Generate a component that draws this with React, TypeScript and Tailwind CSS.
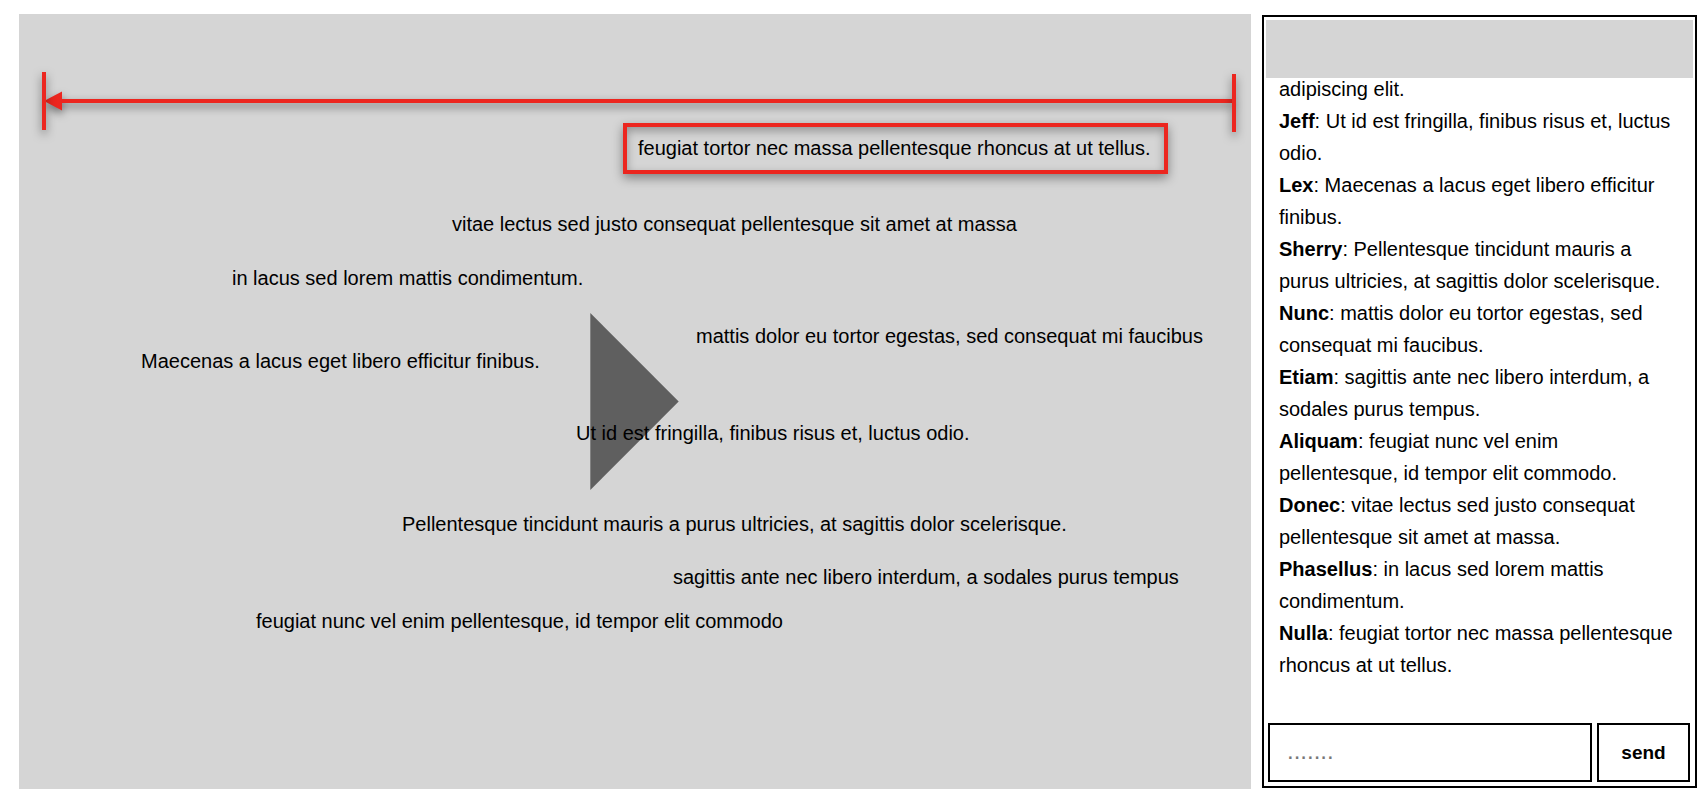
type Comment = { text: string; place: string };

const comments: Comment[] = [
  { text: "vitae lectus sed justo consequat pellentesque sit amet at massa", place: "left-[433px] top-[198px]" },
  { text: "in lacus sed lorem mattis condimentum.", place: "left-[213px] top-[252px]" },
  { text: "mattis dolor eu tortor egestas, sed consequat mi faucibus", place: "left-[677px] top-[310px]" },
  { text: "Maecenas a lacus eget libero efficitur finibus.", place: "left-[122px] top-[335px]" },
  { text: "Ut id est fringilla, finibus risus et, luctus odio.", place: "left-[557px] top-[407px]" },
  { text: "Pellentesque tincidunt mauris a purus ultricies, at sagittis dolor scelerisque.", place: "left-[383px] top-[498px]" },
  { text: "sagittis ante nec libero interdum, a sodales purus tempus", place: "left-[654px] top-[551px]" },
  { text: "feugiat nunc vel enim pellentesque, id tempor elit commodo", place: "left-[237px] top-[595px]" },
];

const messages = [
  { name: "", text: "adipiscing elit." },
  { name: "Jeff", text: "Ut id est fringilla, finibus risus et, luctus odio." },
  { name: "Lex", text: "Maecenas a lacus eget libero efficitur finibus." },
  { name: "Sherry", text: "Pellentesque tincidunt mauris a purus ultricies, at sagittis dolor scelerisque." },
  { name: "Nunc", text: "mattis dolor eu tortor egestas, sed consequat mi faucibus." },
  { name: "Etiam", text: "sagittis ante nec libero interdum, a sodales purus tempus." },
  { name: "Aliquam", text: "feugiat nunc vel enim pellentesque, id tempor elit commodo." },
  { name: "Donec", text: "vitae lectus sed justo consequat pellentesque sit amet at massa." },
  { name: "Phasellus", text: "in lacus sed lorem mattis condimentum." },
  { name: "Nulla", text: "feugiat tortor nec massa pellentesque rhoncus at ut tellus." },
];

// Horizontal span with end bars that shows the travel of a comment.
function TravelArrow() {
  return (
    <div className="absolute left-[23px] right-[15px] top-[58px] h-[60px]" aria-hidden="true">
      <div className="absolute left-[2px] right-[3px] top-[19px] flex h-5 items-center drop-shadow-[0_4px_4px_rgba(0,0,0,0.5)]">
        <svg className="h-5 w-[18px] shrink-0" viewBox="0 0 18 20">
          <path d="M0 10 18 0.5v19z" fill="#ec261f" />
        </svg>
        <div className="h-1 flex-1 bg-[#ec261f]" />
      </div>
      <div className="absolute left-0 top-0 h-[58px] w-1 bg-[#ec261f] shadow-[0_4px_10px_rgba(0,0,0,0.5)]" />
      <div className="absolute right-0 top-[2px] h-[58px] w-1 bg-[#ec261f] shadow-[0_4px_10px_rgba(0,0,0,0.5)]" />
    </div>
  );
}

function Stage() {
  return (
    <section className="relative min-w-0 flex-1 overflow-hidden bg-[#d5d5d5]" aria-label="Video">
      <TravelArrow />
      <button type="button" aria-label="Play" className="absolute left-[571px] top-[299px]">
        <svg className="block h-[177px] w-[89px]" viewBox="0 0 89 177">
          <path d="M0.3 0 88.7 88.5 0.3 177z" fill="#5f5f5f" />
        </svg>
      </button>
      <p className="absolute left-[604px] top-[109px] flex h-[51px] items-center whitespace-nowrap border-4 border-[#ec261f] pb-[2px] pl-[11px] pr-[13px] shadow-[0_4px_10px_rgba(0,0,0,0.4),inset_0_4px_10px_rgba(0,0,0,0.3)]">
        feugiat tortor nec massa pellentesque rhoncus at ut tellus.
      </p>
      {comments.map((c) => (
        <p key={c.text} className={`absolute whitespace-nowrap ${c.place}`}>
          {c.text}
        </p>
      ))}
    </section>
  );
}

function Chat() {
  return (
    <aside className="my-px flex w-[435px] shrink-0 flex-col border-2 border-black" aria-label="Chat">
      <header className="mx-[2px] mt-[3px] h-[58px] shrink-0 bg-[#d5d5d5]" />
      <div className="flex min-h-0 flex-1 flex-col justify-end overflow-hidden pb-[42px] pl-[15px] pr-5">
        <ul className="leading-8">
          {messages.map((m) => (
            <li key={m.text}>
              {m.name && (
                <>
                  <b>{m.name}</b>:{" "}
                </>
              )}
              {m.text}
            </li>
          ))}
        </ul>
      </div>
      <form className="mb-1 ml-1 mr-[5px] flex h-[59px] shrink-0 gap-[5px]" onSubmit={(e) => e.preventDefault()}>
        <input
          type="text"
          aria-label="Message"
          placeholder="......."
          className="min-w-0 flex-1 border-2 border-black bg-white px-[17px] pb-1 text-2xl outline-none placeholder:text-[#777777]"
        />
        <button type="submit" className="w-[93px] border-2 border-black bg-white text-[19px] font-bold">
          send
        </button>
      </form>
    </aside>
  );
}

export default function App() {
  return (
    <main className="flex h-screen min-h-[720px] gap-[11px] bg-white pb-[19px] pl-[19px] pr-[11px] pt-[14px] font-['Liberation_Sans',Arial,sans-serif] text-[20px] leading-6 text-black">
      <Stage />
      <Chat />
    </main>
  );
}
